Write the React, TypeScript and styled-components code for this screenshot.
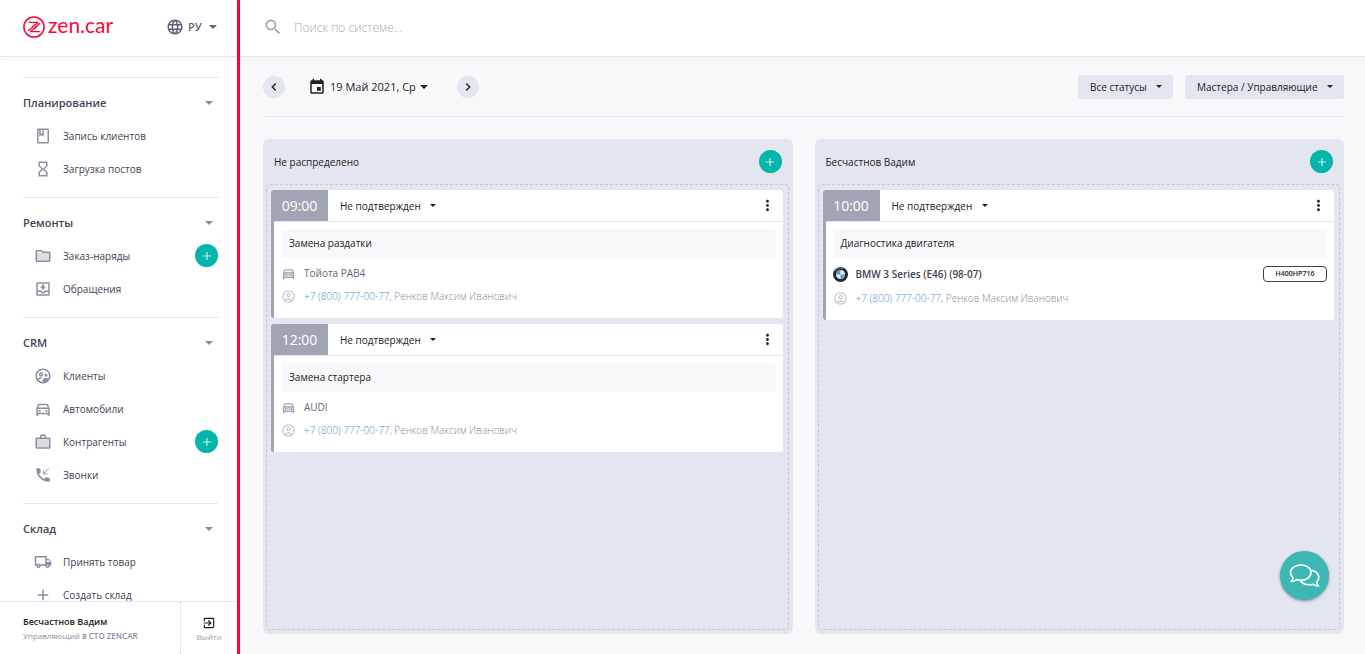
import React from "react";
import styled, { createGlobalStyle, css } from "styled-components";
import {
  MdAdd,
  MdChevronLeft,
  MdChevronRight,
  MdEvent,
  MdExitToApp,
  MdHourglassEmpty,
  MdLanguage,
  MdMoreVert,
  MdOutlineAccountCircle,
  MdOutlineClass,
  MdOutlineDirectionsCar,
  MdOutlineFolder,
  MdOutlineLocalShipping,
  MdOutlineMoveToInbox,
  MdOutlineSupervisedUserCircle,
  MdPhoneCallback,
  MdSearch,
  MdWorkOutline,
} from "react-icons/md";

const color = {
  brand: "#f9063b",
  teal: "#04b5ab",
  line: "#e4e6ef",
  page: "#f8f8fb",
  panel: "#e4e6ef",
  ink: "#212121",
  text: "#3f4254",
  muted: "#8a8fa0",
  slate: "#a1a5b3",
};

const GlobalStyle = createGlobalStyle`
  *, *::before, *::after { box-sizing: border-box; }
  body {
    margin: 0;
    font-family: "Open Sans", "Noto Sans", sans-serif;
    font-size: 10px;
    color: ${color.ink};
    background: ${color.page};
  }
  button, input, select { font: inherit; color: inherit; }
  button { border: 0; padding: 0; background: none; cursor: pointer; }
  h2, h3, p, ul { margin: 0; padding: 0; }
  ul { list-style: none; }
  a { color: inherit; text-decoration: none; }
  svg { display: block; flex: none; }
`;

const Shell = styled.div`
  display: flex;
  height: 100vh;
`;

/* Sidebar */

const Sidebar = styled.aside`
  display: flex;
  flex-direction: column;
  flex: 0 0 240px;
  border-right: 3px solid ${color.brand};
  background: #fff;
`;

const BrandBar = styled.div`
  display: flex;
  align-items: center;
  justify-content: space-between;
  flex: 0 0 57px;
  padding: 0 20px 3px 23px;
  border-bottom: 1px solid ${color.line};
  box-shadow: 0 2px 6px rgba(60, 60, 110, 0.05);
`;

const Brand = styled.a`
  display: flex;
  align-items: center;
  gap: 3px;
  color: ${color.brand};
  font-family: Lato, sans-serif;
  font-size: 21px;
  line-height: 22px;
`;

const BrandName = styled.span`
  padding-bottom: 3px;
`;

const Language = styled.label`
  display: flex;
  align-items: center;
  gap: 4px;
  color: #5b6374;
  font-size: 11px;
`;

const Navigation = styled.nav`
  flex: 1;
  min-height: 0;
  overflow: hidden;
  padding: 20px 19px 0 23px;
`;

const NavGroup = styled.section`
  padding: 8px 0 12px;
  border-top: 1px solid ${color.line};
`;

const NavTitle = styled.button`
  display: flex;
  align-items: center;
  justify-content: space-between;
  width: 100%;
  height: 33px;
  padding-right: 5px;
  color: ${color.muted};
`;

const NavTitleText = styled.span`
  color: ${color.text};
  font-size: 11px;
  font-weight: 600;
`;

const NavItem = styled.li`
  display: flex;
  align-items: center;
  justify-content: space-between;
  height: 33px;
`;

const NavLink = styled.a`
  display: flex;
  align-items: center;
  gap: 11px;
  padding-left: 11px;
  color: ${color.text};
  svg { color: ${color.muted}; }
`;

const AddButton = styled.button`
  display: grid;
  place-items: center;
  width: 23px;
  height: 23px;
  border-radius: 50%;
  background: ${color.teal};
  color: #c9f0ed;
`;

const UserBar = styled.footer`
  display: flex;
  flex: 0 0 53px;
  border-top: 1px solid ${color.line};
`;

const UserInfo = styled.div`
  flex: 1;
  padding: 12px 0 0 23px;
  border-right: 1px dotted #d0d3e2;
`;

const UserName = styled.p`
  font-size: 9px;
  line-height: 16px;
  font-weight: 600;
`;

const UserRole = styled.p`
  color: ${color.muted};
  font-size: 8px;
  line-height: 12px;
`;

const UserCompany = styled.span`
  font-weight: 600;
`;

const LogoutButton = styled.button`
  display: flex;
  flex-direction: column;
  align-items: center;
  justify-content: center;
  gap: 1px;
  width: 56px;
  padding-top: 2px;
  color: ${color.ink};
`;

const LogoutText = styled.span`
  color: ${color.slate};
  font-size: 8px;
  line-height: 11px;
`;

/* Main area */

const Main = styled.div`
  display: flex;
  flex-direction: column;
  flex: 1;
  min-width: 0;
`;

const SearchBar = styled.label`
  display: flex;
  align-items: center;
  gap: 11px;
  flex: 0 0 57px;
  padding: 0 21px 2px 23px;
  border-bottom: 1px solid ${color.line};
  background: #fff;
  color: ${color.slate};
  box-shadow: 0 2px 6px rgba(60, 60, 110, 0.05);
`;

const SearchInput = styled.input`
  flex: 1;
  border: 0;
  outline: 0;
  padding: 0;
  background: transparent;
  font-size: 12px;
  font-weight: 300;
  &::placeholder { color: #a6a9b4; opacity: 1; }
`;

const Content = styled.main`
  display: flex;
  flex-direction: column;
  flex: 1;
  min-height: 0;
  padding: 0 21px 20px 23px;
`;

const Toolbar = styled.div`
  display: flex;
  align-items: center;
  justify-content: space-between;
  flex: 0 0 60px;
  border-bottom: 1px solid ${color.line};
`;

const ToolbarPart = styled.div<{ $gap: number }>`
  display: flex;
  align-items: center;
  gap: ${(p) => p.$gap}px;
`;

const RoundButton = styled.button`
  display: grid;
  place-items: center;
  width: 22px;
  height: 22px;
  border-radius: 50%;
  background: ${color.panel};
`;

const DateButton = styled.button`
  display: flex;
  align-items: center;
  gap: 4px;
  margin-right: 6px;
  font-size: 11px;
`;

const SelectBox = styled.span<{ $filled?: boolean }>`
  display: inline-grid;
  align-items: center;
  border-radius: 3px;
  > * { grid-area: 1 / 1; }
  > svg { justify-self: end; pointer-events: none; }
  ${(p) =>
    p.$filled &&
    css`
      height: 24px;
      background: ${color.panel};
      > svg { margin-right: 11px; }
      > select { height: 24px; padding: 0 26px 0 12px; }
    `}
`;

const Select = styled.select<{ $strong?: boolean }>`
  appearance: none;
  border: 0;
  outline: 0;
  margin: 0;
  padding: 0 15px 0 0;
  background: transparent;
  font-weight: ${(p) => (p.$strong ? 600 : 400)};
`;

const Board = styled.div`
  display: grid;
  grid-template-columns: 1fr 1fr;
  gap: 22px;
  flex: 1;
  min-height: 0;
  padding-top: 22px;
`;

const Column = styled.section`
  display: flex;
  flex-direction: column;
  padding: 0 4px 4px 3px;
  border-radius: 6px;
  background: ${color.panel};
`;

const ColumnHeader = styled.header`
  display: flex;
  align-items: center;
  justify-content: space-between;
  flex: 0 0 45px;
  padding: 0 7px 0 8px;
`;

const ColumnTitle = styled.h2`
  font-size: 10px;
  font-weight: 400;
`;

const DropZone = styled.div`
  display: flex;
  flex-direction: column;
  gap: 6px;
  flex: 1;
  padding: 5px 5px 5px 4px;
  border: 1px dashed #c3c6da;
  border-radius: 4px;
`;

const Card = styled.article`
  padding-bottom: 10px;
  border-left: 3px solid ${color.slate};
  border-radius: 3px;
  background: #fff;
`;

const CardHeader = styled.header`
  display: flex;
  align-items: center;
  height: 32px;
  border-bottom: 1px solid ${color.line};
`;

const Time = styled.time`
  width: 54px;
  margin-right: 12px;
  padding-right: 3px;
  background: ${color.slate};
  color: #fff;
  font-size: 14px;
  line-height: 31px;
  text-align: center;
`;

const MenuButton = styled.button`
  margin: 0 7px 0 auto;
`;

const CardBody = styled.div`
  padding: 7px 7px 0;
`;

const Work = styled.h3`
  margin-bottom: 4px;
  padding: 0 8px;
  border-radius: 3px;
  background: ${color.page};
  font-size: 10px;
  font-weight: 400;
  line-height: 29px;
`;

const Detail = styled.div<{ $height: number }>`
  display: flex;
  align-items: center;
  gap: 8px;
  height: ${(p) => p.$height}px;
`;

const DetailIcon = styled.span<{ $soft?: boolean }>`
  display: grid;
  place-items: center;
  width: 15px;
  color: ${(p) => (p.$soft ? "#c6c8d1" : color.slate)};
`;

const CarName = styled.span<{ $strong?: boolean }>`
  color: ${(p) => (p.$strong ? color.text : "#626678")};
  font-weight: ${(p) => (p.$strong ? 600 : 400)};
`;

const Plate = styled.span`
  width: 64px;
  margin-left: auto;
  border: 1px solid ${color.text};
  border-radius: 4px;
  font-size: 7px;
  font-weight: 600;
  line-height: 14px;
  text-align: center;
`;

const Client = styled.p`
  color: #868995;
  font-weight: 300;
`;

const Phone = styled.a`
  color: #4f91d4;
`;

const ChatButton = styled.button`
  position: fixed;
  right: 36px;
  bottom: 54px;
  display: grid;
  place-items: center;
  width: 49px;
  height: 49px;
  border-radius: 50%;
  background: #3db8b4;
  color: #fff;
  box-shadow: 0 1px 3px rgba(0, 0, 0, 0.4);
`;

/* Drawings */

const Caret = ({ wide }: { wide?: boolean }) => (
  <svg width={wide ? 8 : 6} height={wide ? 4 : 3} viewBox="0 0 8 4" aria-hidden="true">
    <path d="M0 0h8L4 4z" fill="currentColor" />
  </svg>
);

const BrandMark = () => (
  <svg width="22" height="22" viewBox="0 0 22 22" fill="none" stroke="currentColor" aria-hidden="true">
    <circle cx="11" cy="11" r="10.1" strokeWidth="1.5" />
    <path
      d="M6.200 6.400h8.800L5.400 14.600M12 12.400L16.600 7.600M16.400 7.800L7.600 15.600h8.800M9.200 11.200l3-2.400"
      strokeWidth="1.3"
      strokeLinejoin="round"
      strokeLinecap="round"
    />
  </svg>
);

const FolderIcon = () => (
  <svg width="18" height="18" viewBox="0 0 24 24" aria-hidden="true">
    <path d="M4 8h16v10H4z" fill="#dcdde1" />
    <MdOutlineFolder size={24} />
  </svg>
);

const CaseIcon = () => (
  <svg width="18" height="18" viewBox="0 0 24 24" aria-hidden="true">
    <path d="M4 8h16v11H4z" fill="#dcdde1" />
    <MdWorkOutline size={24} />
  </svg>
);

const CarIcon = () => (
  <svg width="15" height="15" viewBox="0 0 24 24" aria-hidden="true">
    <path d="M5 11h14v6H5z" fill="#d0d2d9" />
    <MdOutlineDirectionsCar size={24} />
  </svg>
);

const BmwIcon = () => (
  <svg width="15" height="15" viewBox="0 0 30 30" aria-hidden="true">
    <circle cx="15" cy="15" r="15" fill="#23272c" />
    <path d="M4 8a13 13 0 0 1 16-5" fill="none" stroke="#8a9097" strokeWidth="2" />
    <circle cx="15" cy="15" r="9" fill="#eef3f6" />
    <path d="M15 15V6a9 9 0 0 0-9 9zM15 15v9a9 9 0 0 0 9-9z" fill="#4aa0d0" />
  </svg>
);

const ChatIcon = () => (
  <svg width="32" height="26" viewBox="0 0 32 26" fill="none" stroke="currentColor" strokeWidth="1.6" strokeLinejoin="round" aria-hidden="true">
    <path d="M12 2c5.600 0 10 3.300 10 7.600s-4.400 7.700-10 7.700c-1.500 0-2.900-.2-4.200-.7-1.300 1.200-3.200 1.900-5.600 1.900 1-1 1.600-2.300 1.700-3.800C2.500 13.300 1.500 11.500 1.500 9.600 1.500 5.300 6.400 2 12 2z" />
    <path d="M22.300 7.400c4.300.3 7.500 3.200 7.500 6.800 0 1.900-.8 3.500-2.200 4.800.1 1.500.8 2.900 1.900 4-2.300 0-4.200-.6-5.500-1.800-1.200.4-2.500.6-3.800.6-4 0-7.200-1.800-8.700-4.500" />
  </svg>
);

/* Data */

type Item = { label: string; icon: React.ReactNode; add?: boolean };

const groups: { title: string; items: Item[] }[] = [
  {
    title: "Планирование",
    items: [
      { label: "Запись клиентов", icon: <MdOutlineClass size={18} /> },
      { label: "Загрузка постов", icon: <MdHourglassEmpty size={18} /> },
    ],
  },
  {
    title: "Ремонты",
    items: [
      { label: "Заказ-наряды", icon: <FolderIcon />, add: true },
      { label: "Обращения", icon: <MdOutlineMoveToInbox size={18} /> },
    ],
  },
  {
    title: "CRM",
    items: [
      { label: "Клиенты", icon: <MdOutlineSupervisedUserCircle size={18} /> },
      { label: "Автомобили", icon: <MdOutlineDirectionsCar size={18} /> },
      { label: "Контрагенты", icon: <CaseIcon />, add: true },
      { label: "Звонки", icon: <MdPhoneCallback size={18} /> },
    ],
  },
  {
    title: "Склад",
    items: [
      { label: "Принять товар", icon: <MdOutlineLocalShipping size={18} /> },
      { label: "Создать склад", icon: <MdAdd size={18} /> },
    ],
  },
];

type Booking = { time: string; work: string; car: string; plate?: string };

const columns: { title: string; bookings: Booking[] }[] = [
  {
    title: "Не распределено",
    bookings: [
      { time: "09:00", work: "Замена раздатки", car: "Тойота РАВ4" },
      { time: "12:00", work: "Замена стартера", car: "AUDI" },
    ],
  },
  {
    title: "Бесчастнов Вадим",
    bookings: [
      { time: "10:00", work: "Диагностика двигателя", car: "BMW 3 Series (E46) (98-07)", plate: "Н400НР716" },
    ],
  },
];

const BookingCard = ({ time, work, car, plate }: Booking) => (
  <Card>
    <CardHeader>
      <Time>{time}</Time>
      <SelectBox>
        <Select aria-label={`Статус записи ${time}`}>
          <option>Не подтвержден</option>
        </Select>
        <Caret />
      </SelectBox>
      <MenuButton aria-label="Действия">
        <MdMoreVert size={17} />
      </MenuButton>
    </CardHeader>
    <CardBody>
      <Work>{work}</Work>
      <Detail $height={plate ? 24 : 22}>
        <DetailIcon>{plate ? <BmwIcon /> : <CarIcon />}</DetailIcon>
        <CarName $strong={!!plate}>{car}</CarName>
        {plate && <Plate>{plate}</Plate>}
      </Detail>
      <Detail $height={24}>
        <DetailIcon $soft>
          <MdOutlineAccountCircle size={15} />
        </DetailIcon>
        <Client>
          <Phone href="tel:+78007770077">+7 (800) 777-00-77</Phone>, Ренков Максим Иванович
        </Client>
      </Detail>
    </CardBody>
  </Card>
);

export default function App() {
  return (
    <Shell>
      <GlobalStyle />
      <Sidebar>
        <BrandBar>
          <Brand href="#">
            <BrandMark />
            <BrandName>zen.car</BrandName>
          </Brand>
          <Language>
            <MdLanguage size={18} />
            <SelectBox>
              <Select $strong aria-label="Язык">
                <option>РУ</option>
              </Select>
              <Caret wide />
            </SelectBox>
          </Language>
        </BrandBar>
        <Navigation>
          {groups.map((group) => (
            <NavGroup key={group.title}>
              <NavTitle>
                <NavTitleText>{group.title}</NavTitleText>
                <Caret wide />
              </NavTitle>
              <ul>
                {group.items.map((item) => (
                  <NavItem key={item.label}>
                    <NavLink href="#">
                      {item.icon}
                      {item.label}
                    </NavLink>
                    {item.add && (
                      <AddButton aria-label={`Добавить: ${item.label}`}>
                        <MdAdd size={14} />
                      </AddButton>
                    )}
                  </NavItem>
                ))}
              </ul>
            </NavGroup>
          ))}
        </Navigation>
        <UserBar>
          <UserInfo>
            <UserName>Бесчастнов Вадим</UserName>
            <UserRole>
              Управляющий <UserCompany>в СТО ZENCAR</UserCompany>
            </UserRole>
          </UserInfo>
          <LogoutButton>
            <MdExitToApp size={14} />
            <LogoutText>Выйти</LogoutText>
          </LogoutButton>
        </UserBar>
      </Sidebar>
      <Main>
        <SearchBar>
          <MdSearch size={20} />
          <SearchInput type="search" aria-label="Поиск" placeholder="Поиск по системе..." />
        </SearchBar>
        <Content>
          <Toolbar>
            <ToolbarPart $gap={23}>
              <RoundButton aria-label="Предыдущий день">
                <MdChevronLeft size={16} />
              </RoundButton>
              <DateButton>
                <MdEvent size={18} />
                19 Май 2021, Ср
                <Caret wide />
              </DateButton>
              <RoundButton aria-label="Следующий день">
                <MdChevronRight size={16} />
              </RoundButton>
            </ToolbarPart>
            <ToolbarPart $gap={12}>
              <SelectBox $filled>
                <Select aria-label="Статус">
                  <option>Все статусы</option>
                </Select>
                <Caret />
              </SelectBox>
              <SelectBox $filled>
                <Select aria-label="Сотрудники">
                  <option>Мастера / Управляющие</option>
                </Select>
                <Caret />
              </SelectBox>
            </ToolbarPart>
          </Toolbar>
          <Board>
            {columns.map((column) => (
              <Column key={column.title}>
                <ColumnHeader>
                  <ColumnTitle>{column.title}</ColumnTitle>
                  <AddButton aria-label="Добавить запись">
                    <MdAdd size={14} />
                  </AddButton>
                </ColumnHeader>
                <DropZone>
                  {column.bookings.map((booking) => (
                    <BookingCard key={booking.time} {...booking} />
                  ))}
                </DropZone>
              </Column>
            ))}
          </Board>
        </Content>
      </Main>
      <ChatButton aria-label="Открыть чат">
        <ChatIcon />
      </ChatButton>
    </Shell>
  );
}
